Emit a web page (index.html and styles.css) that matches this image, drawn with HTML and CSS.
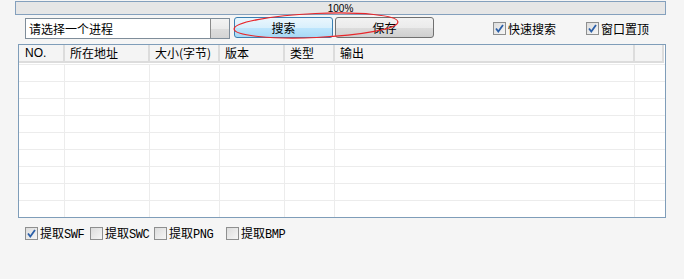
FILE: index.html
```html
<!DOCTYPE html>
<html lang="zh">
<head>
<meta charset="utf-8">
<link rel="stylesheet" href="styles.css">
</head>
<body>
<div class="app">
  <div class="progress"><span class="progress-text">100%</span></div>

  <div class="toolbar">
    <div class="combo">
      <span class="combo-text">请选择一个进程</span>
      <span class="combo-btn"></span>
    </div>
    <button class="btn btn-active">搜索</button>
    <button class="btn">保存</button>
    <label class="chk chk-fast"><span class="box checked"><svg viewBox="0 0 13 13" width="13" height="13"><path d="M3 6.5 L5.3 9.5 L10 3" fill="none" stroke="#2b5fa8" stroke-width="1.8"/></svg></span><span class="lbl">快速搜索</span></label>
    <label class="chk chk-top"><span class="box checked"><svg viewBox="0 0 13 13" width="13" height="13"><path d="M3 6.5 L5.3 9.5 L10 3" fill="none" stroke="#2b5fa8" stroke-width="1.8"/></svg></span><span class="lbl">窗口置顶</span></label>
  </div>

  <div class="grid">
    <div class="row head">
      <div class="cell">NO.</div>
      <div class="cell">所在地址</div>
      <div class="cell">大小(字节)</div>
      <div class="cell">版本</div>
      <div class="cell">类型</div>
      <div class="cell">输出</div>
      <div class="cell"></div>
    </div>
    <div class="gap"></div>
    <div class="row"><div class="cell"></div><div class="cell"></div><div class="cell"></div><div class="cell"></div><div class="cell"></div><div class="cell"></div><div class="cell"></div></div>
    <div class="row"><div class="cell"></div><div class="cell"></div><div class="cell"></div><div class="cell"></div><div class="cell"></div><div class="cell"></div><div class="cell"></div></div>
    <div class="row"><div class="cell"></div><div class="cell"></div><div class="cell"></div><div class="cell"></div><div class="cell"></div><div class="cell"></div><div class="cell"></div></div>
    <div class="row"><div class="cell"></div><div class="cell"></div><div class="cell"></div><div class="cell"></div><div class="cell"></div><div class="cell"></div><div class="cell"></div></div>
    <div class="row"><div class="cell"></div><div class="cell"></div><div class="cell"></div><div class="cell"></div><div class="cell"></div><div class="cell"></div><div class="cell"></div></div>
    <div class="row"><div class="cell"></div><div class="cell"></div><div class="cell"></div><div class="cell"></div><div class="cell"></div><div class="cell"></div><div class="cell"></div></div>
    <div class="row"><div class="cell"></div><div class="cell"></div><div class="cell"></div><div class="cell"></div><div class="cell"></div><div class="cell"></div><div class="cell"></div></div>
    <div class="row"><div class="cell"></div><div class="cell"></div><div class="cell"></div><div class="cell"></div><div class="cell"></div><div class="cell"></div><div class="cell"></div></div>
    <div class="row"><div class="cell"></div><div class="cell"></div><div class="cell"></div><div class="cell"></div><div class="cell"></div><div class="cell"></div><div class="cell"></div></div>
  </div>

  <div class="extract">
    <label class="chk ex ex1"><span class="box checked"><svg viewBox="0 0 13 13" width="13" height="13"><path d="M3 6.5 L5.3 9.5 L10 3" fill="none" stroke="#2b5fa8" stroke-width="1.8"/></svg></span><span class="lbl">提取<span class="mono">SWF</span></span></label>
    <label class="chk ex ex2"><span class="box"></span><span class="lbl">提取<span class="mono">SWC</span></span></label>
    <label class="chk ex ex3"><span class="box"></span><span class="lbl">提取<span class="mono">PNG</span></span></label>
    <label class="chk ex ex4"><span class="box"></span><span class="lbl">提取<span class="mono">BMP</span></span></label>
  </div>

  <svg class="mark" width="684" height="279" viewBox="0 0 684 279">
    <ellipse cx="316" cy="24.5" rx="82" ry="12" transform="rotate(-2.5 316 24.5)" fill="none" stroke="#e8262a" stroke-width="1.2"/>
  </svg>
</div>
</body>
</html>
```

FILE: styles.css
```css
html, body {
  margin: 0;
  padding: 0;
  background: #f5f5f5;
}

body {
  width: 684px;
  height: 279px;
  overflow: hidden;
  font-family: "Noto Sans CJK SC", "Microsoft YaHei", sans-serif;
  font-size: 12px;
  color: #000;
}

.app {
  position: relative;
  width: 684px;
  height: 279px;
}

.progress {
  box-sizing: border-box;
  margin: 1px 0 0 15px;
  width: 651px;
  height: 14px;
  border: 1px solid #84a0bd;
  background: #e6e6e6;
  display: flex;
  justify-content: center;
  align-items: flex-start;
}

.progress-text {
  font-family: "Liberation Sans", Arial, sans-serif;
  font-size: 10px;
  line-height: 10px;
  margin-top: 2px;
  margin-left: 0;
}

.toolbar {
  display: flex;
  align-items: flex-start;
  height: 22px;
  margin-top: 2px;
}

.combo {
  box-sizing: border-box;
  margin: 1px 0 0 25px;
  width: 205px;
  height: 21px;
  border: 1px solid #7f8d9a;
  background: #fff;
  display: flex;
  align-items: stretch;
}

.combo-text {
  flex: 1;
  padding-left: 3px;
  line-height: 19px;
  font-size: 12px;
}

.combo-btn {
  width: 18px;
  border-left: 1px solid #8a8a8a;
  background: linear-gradient(#f3f3f3 0%, #ebebeb 50%, #dddddd 51%, #d4d4d4 100%);
}

.btn {
  box-sizing: border-box;
  height: 21px;
  width: 99px;
  padding: 0;
  margin: 0 0 0 2px;
  border: 1px solid #707070;
  border-radius: 3px;
  background: linear-gradient(#f2f2f2 0%, #ebebeb 50%, #dddddd 51%, #cfcfcf 100%);
  font-family: "Noto Sans CJK SC", sans-serif;
  font-size: 12px;
  line-height: 19px;
  color: #000;
}

.btn-active {
  margin-left: 4px;
  border-color: #3c7fb1;
  background: linear-gradient(#eaf6fd 0%, #d9f0fc 50%, #bee6fd 51%, #a7d9f5 100%);
}

.chk {
  display: flex;
  align-items: center;
  font-size: 12px;
  line-height: 13px;
  height: 13px;
}

.lbl {
  white-space: nowrap;
  line-height: 13px;
}

.box {
  box-sizing: border-box;
  width: 13px;
  height: 13px;
  border: 1px solid #8e8f8f;
  background: linear-gradient(135deg, #dcdcdc 0%, #f6f6f6 100%);
  margin-right: 2px;
  flex: none;
  display: flex;
}

.box svg {
  margin: -1px;
}

.chk-fast {
  margin: 5px 0 0 59px;
}

.chk-top {
  margin: 5px 0 0 30px;
}

.grid {
  box-sizing: border-box;
  margin: 5px 0 0 18px;
  width: 648px;
  height: 174px;
  border: 1px solid #7f9db9;
  background: #fff;
  display: flex;
  flex-direction: column;
}

.row {
  display: grid;
  grid-template-columns: 46px 85px 70px 65px 50px 300px 1fr;
  height: 17px;
  box-sizing: border-box;
  border-top: 1px solid #ececec;
}

.row .cell {
  border-right: 1px solid #ececec;
}

.row .cell:last-child {
  border-right: none;
}

.row.head {
  height: 18px;
  border-top: none;
  border-bottom: 2px solid #dcdcdc;
  background: #f4f4f4;
  margin-right: 1px;
}

.row.head .cell {
  border-right: 2px solid #dcdcdc;
  padding-left: 5px;
  line-height: 16px;
  font-size: 12px;
}

.row.head .cell:first-child {
  font-family: "Liberation Sans", Arial, sans-serif;
  padding-left: 6px;
}

.row.head .cell:last-child {
  border-right: 2px solid #dcdcdc;
}

.gap {
  height: 1px;
}

.extract {
  display: flex;
  margin: 9px 0 0 25px;
}

.ex {
  font-size: 12px;
}

.ex1 { width: 65px; }
.ex2 { width: 64px; }
.ex3 { width: 72px; }

.mono {
  font-family: "Liberation Mono", "Courier New", monospace;
  font-size: 12px;
  letter-spacing: -0.5px;
}

.mark {
  position: absolute;
  left: 0;
  top: 0;
  pointer-events: none;
}
```
